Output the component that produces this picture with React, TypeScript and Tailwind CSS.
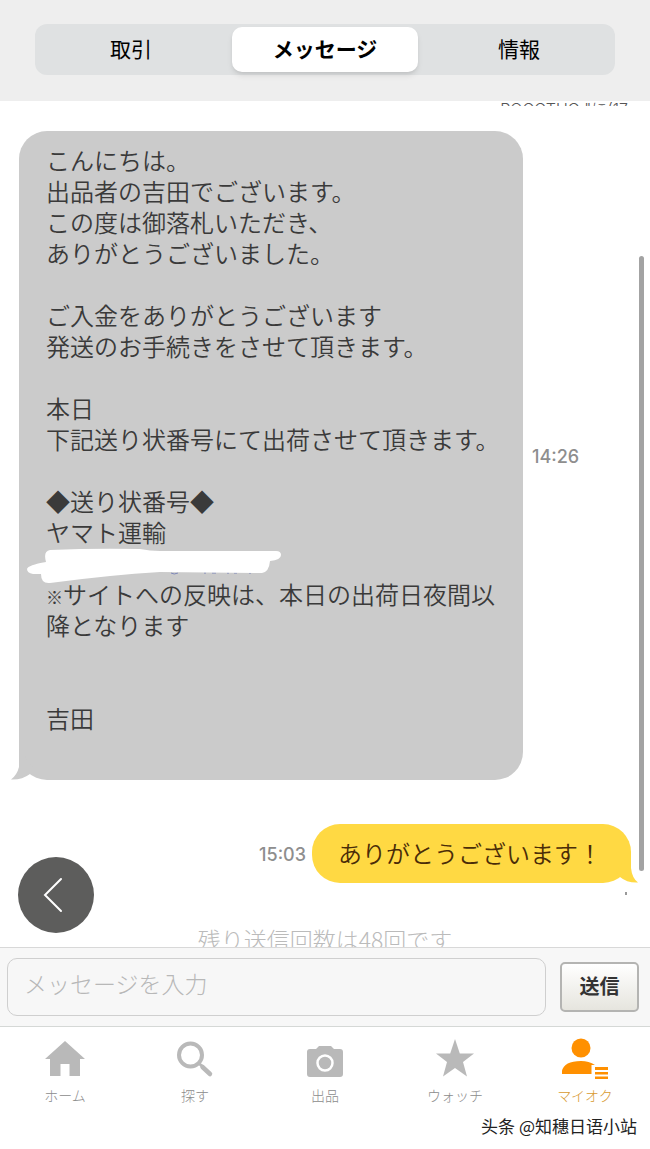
import React from "react";

const segments = [
  { name: "取引", className: "pr-[5px] font-normal" },
  {
    name: "メッセージ",
    className: "rounded-[10px] bg-white font-bold shadow-md",
  },
  { name: "情報", className: "pl-[5px] font-normal" },
];

const sellerMessage = [
  "こんにちは。",
  "出品者の吉田でございます。",
  "この度は御落札いただき、",
  "ありがとうございました。",
  "",
  "ご入金をありがとうございます",
  "発送のお手続きをさせて頂きます。",
  "",
  "本日",
  "下記送り状番号にて出荷させて頂きます。",
  "",
  "◆送り状番号◆",
  "ヤマト運輸",
];

const HomeIcon = () => (
  <svg viewBox="0 0 42 42" className="h-[42px] w-[42px]" fill="currentColor">
    <path d="M21 4 L41 22 H36 V39 H25.500 V27 H16.500 V39 H6 V22 H1 Z" />
  </svg>
);

const SearchIcon = () => (
  <svg
    viewBox="0 0 42 42"
    className="h-[42px] w-[42px]"
    fill="none"
    stroke="currentColor"
  >
    <circle cx="16.500" cy="18" r="11.500" strokeWidth="4" />
    <path d="M24.500 26 L29 30" strokeWidth="3" />
    <path d="M28.500 30 L36 37" strokeWidth="4.500" strokeLinecap="round" />
  </svg>
);

const CameraIcon = () => (
  <svg viewBox="0 0 42 42" className="h-[42px] w-[42px]" fill="currentColor">
    <path d="M6 12 H12 L15 9 H27 L30 12 H36 Q39 12 39 15 V37 Q39 40 36 40 H6 Q3 40 3 37 V15 Q3 12 6 12 Z" />
    <circle cx="21" cy="26" r="7.500" fill="none" stroke="#fff" strokeWidth="2.500" />
  </svg>
);

const StarIcon = () => (
  <svg viewBox="0 0 42 42" className="h-[42px] w-[42px]" fill="currentColor">
    <path d="M21 2 L25.800 16.500 H40 L29 25 L33 39.500 L21 31 L9 39.500 L13 25 L2 16.500 H16.200 Z" />
  </svg>
);

const MyAucIcon = () => (
  <svg viewBox="0 0 50 42" className="h-[42px] w-[50px]" fill="currentColor">
    <circle cx="21" cy="11" r="9.500" />
    <path d="M2 37 V34 Q4 24 21 24 Q29 24 35 28 H31.500 V37 Z" />
    <path d="M35 30 H48 V33 H35 Z M35 35 H48 V37.500 H35 Z M35 39.500 H48 V42 H35 Z" />
  </svg>
);

const tabs = [
  { label: "ホーム", icon: <HomeIcon /> },
  { label: "探す", icon: <SearchIcon /> },
  { label: "出品", icon: <CameraIcon /> },
  { label: "ウォッチ", icon: <StarIcon /> },
  { label: "マイオク", icon: <MyAucIcon />, active: true },
];

function Header() {
  return (
    <header className="bg-[#eeeeee] px-[35px] pt-6 pb-[26px]">
      <div className="grid grid-cols-[1fr_186px_1fr] rounded-xl bg-[#dfe1e2] py-[3px]">
        {segments.map((segment) => (
          <button
            key={segment.name}
            type="button"
            className={`h-[45px] pb-[2px] text-[21px] text-black ${segment.className}`}
          >
            {segment.name}
          </button>
        ))}
      </div>
    </header>
  );
}

function SellerBubble() {
  return (
    <div className="flex items-center gap-[9px] pl-[19px]">
      <div className="relative w-[504px] rounded-[28px] bg-[#cbcbcb] pt-[13px] pr-[20px] pb-4 pl-[27px] text-2xl leading-[31px] font-[350] text-[#3a3a3a]">
        {sellerMessage.map((line, i) => (
          <p key={i} className="min-h-[31px]">
            {line}
          </p>
        ))}
        {/* tracking number, scribbled out */}
        <div className="relative h-[31px]">
          <svg
            viewBox="27 547 256 37"
            className="absolute top-0 -left-[19px] h-[37px] w-[256px]"
          >
            <path
              stroke="#7d86b8"
              fill="none"
              d="M171 573 Q174 575 178 573 M204 573 h2 M212 573 h4 M227 573 h2 M234 573 h3 M249 573 h2"
            />
            <path
              fill="#fff"
              d="M50 550 Q95 548 140 549 Q150 551 160 551 H276 Q281 551 281 555 Q281 560 270 561 Q269 572 262 573 L160 572 Q110 575 50 583 Q41 584 41 574 L33 574 Q27 573 27 569 Q28 565 46 562 Q43 551 50 550 Z"
            />
          </svg>
        </div>
        <p>
          <span className="text-[17px] leading-none font-bold">※</span>
          サイトへの反映は、本日の出荷日夜間以降となります
        </p>
        <p className="pt-[62px] pb-[31px]">吉田</p>
        <svg
          viewBox="0 0 22 32"
          className="absolute bottom-0 -left-2 h-8 w-[22px]"
          fill="#cbcbcb"
        >
          <path d="M8 0 V19 Q6 27 0 31.500 Q11 32 19 26 L22 20 Z" />
        </svg>
      </div>
      <time className="pt-[2px] font-[Inter] text-lg font-medium text-[#8e8e8e]">
        14:26
      </time>
    </div>
  );
}

function BuyerBubble() {
  return (
    <div className="mt-11 flex items-center justify-end gap-[6px] pr-[19px]">
      <time className="pt-[2px] font-[Inter] text-lg font-medium text-[#8e8e8e]">
        15:03
      </time>
      <div className="relative rounded-[28px] bg-[#ffd943] pt-[13px] pr-[29px] pb-[15px] pl-[26px] text-2xl leading-[31px] font-[350] text-[#4a2c08]">
        ありがとうございます！
        <svg
          viewBox="0 0 22 32"
          className="absolute -right-[7px] bottom-0 h-8 w-[22px]"
          fill="#ffd943"
        >
          <path d="M15 0 V17 Q16 27 22 31.500 Q11 32 4 26 L0 20 Z" />
        </svg>
      </div>
    </div>
  );
}

export default function App() {
  return (
    <div className="relative flex min-h-screen flex-col bg-white font-['Noto_Sans_CJK_JP',sans-serif]">
      <Header />

      <main className="relative flex-1 overflow-hidden">
        {/* last line of the previous message, cut by the header */}
        <div className="h-[5px] overflow-hidden pr-[22px] text-right font-[Inter,'Noto_Sans_CJK_JP'] text-base leading-4 font-light text-[#555]">
          ROCCTUG "に(17
        </div>
        <div className="pt-[25px]">
          <SellerBubble />
          <BuyerBubble />
        </div>
        <p className="mt-10 h-6 overflow-hidden text-center text-[23px] leading-8 font-light text-[#bbb]">
          残り送信回数は48回です
        </p>

        <button
          type="button"
          aria-label="戻る"
          className="absolute bottom-[14px] left-[18px] h-[76px] w-[76px] rounded-full bg-[#5d5d5c]"
        >
          <svg
            viewBox="0 0 76 76"
            fill="none"
            stroke="#fff"
            strokeWidth="2"
            strokeLinecap="round"
          >
            <path d="M43 22 L27 38 L43 54" />
          </svg>
        </button>
        <div className="absolute top-[155px] right-[6px] bottom-[76px] w-[5px] rounded-full bg-[#a3a3a3]" />
        <div className="absolute right-[23px] bottom-[52px] h-[3px] w-[2px] bg-[#999]" />
      </main>

      <form
        className="flex items-center gap-[14px] border-t border-[#d8d8d8] bg-[#f7f7f7] py-[10px] pr-[11px] pl-[7px]"
        onSubmit={(e) => e.preventDefault()}
      >
        <input
          type="text"
          aria-label="メッセージを入力"
          placeholder="メッセージを入力"
          className="h-[58px] min-w-0 flex-1 rounded-[10px] border border-[#cfcfcf] bg-[#f7f7f7] px-4 pb-2 text-[23px] font-light text-[#333] placeholder:text-[#b8b8b8]"
        />
        <button
          type="submit"
          className="h-[50px] w-[79px] rounded-[5px] border-2 border-[#b4b4b2] bg-linear-to-b from-white to-[#e6e5de] pb-[2px] text-xl font-bold text-[#333]"
        >
          送信
        </button>
      </form>

      <nav className="grid h-[123px] grid-cols-5 border-t border-[#d5d8d6] bg-white">
        {tabs.map((tab) => (
          <a
            key={tab.label}
            href="#"
            className={
              tab.active
                ? "flex flex-col items-center pt-[10px] text-[#ff9000]"
                : "flex flex-col items-center pt-[10px] text-[#b9b9b9]"
            }
          >
            {tab.icon}
            <span
              className={
                tab.active
                  ? "mt-[6px] text-sm font-light text-[#d99a30]"
                  : "mt-[6px] text-sm font-light text-[#8c8c8c]"
              }
            >
              {tab.label}
            </span>
          </a>
        ))}
      </nav>

      <p className="absolute right-[13px] bottom-[11px] font-['Noto_Sans_CJK_SC',sans-serif] text-[17px] leading-6 text-[#222]">
        头条 @知穗日语小站
      </p>
    </div>
  );
}
